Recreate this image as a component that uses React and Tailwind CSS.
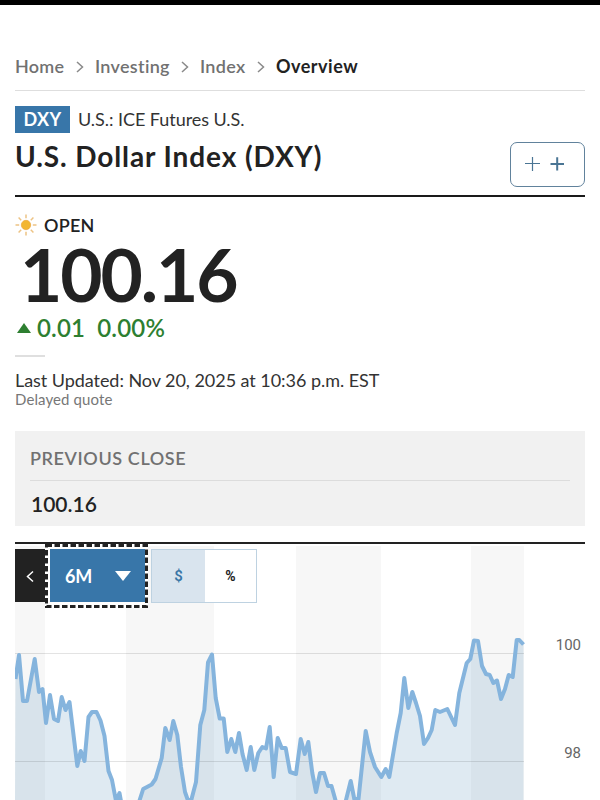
import clsx from 'clsx';

const crumbs = [
    { label: 'Home', width: 'w-[50px]', tracking: 'tracking-[0.25px]' },
    { label: 'Investing', width: 'w-[75px]', tracking: 'tracking-[0.3px]' },
    { label: 'Index', width: 'w-[46px]', tracking: 'tracking-[0.3px]' },
];

// Alternating month bands, [x, width]
const bands = [[0, 30], [111, 88], [281, 85], [456, 53]];

// Closing prices in page coordinates, shifted into the chart's box below
const prices = [
    [15.5, 679], [19, 655], [23, 701], [27, 701], [34.7, 659], [39, 692], [42.5, 689], [46, 723], [50, 695],
    [54, 719], [58, 721], [61.7, 697], [65.5, 710], [69.5, 702], [77.3, 766], [80.7, 751], [84.5, 761],
    [88.5, 717], [92, 712], [96.5, 712], [100.5, 720.5], [104.5, 736], [108.5, 771], [112, 780], [116, 801],
    [119.5, 793], [123, 812], [136, 812], [140, 799], [143.2, 789], [151.7, 784.5], [155.5, 779], [161.7, 758],
    [165.3, 728], [169.7, 740], [173.3, 721], [177.3, 735], [181, 767], [185, 792], [187.8, 800], [191.3, 800],
    [196, 782], [200.3, 725], [204.3, 710], [208, 662.5], [212, 654.5], [215.7, 698], [219.7, 718.5],
    [223.7, 718.5], [227.3, 752], [231.3, 739], [235.3, 752], [239, 733], [242.5, 754], [246.7, 770],
    [250.7, 747], [254.3, 770], [258.3, 753], [262.3, 747], [266, 748.5], [269.7, 727], [273.7, 777],
    [277.7, 738], [281.7, 748], [285.7, 748], [290, 772], [296, 774], [300.7, 739], [304.7, 754], [308.3, 742],
    [312.3, 773], [316, 792], [320, 773], [324, 773], [328, 786], [331.5, 786], [336, 802], [345.5, 802],
    [350.7, 781], [354.3, 799], [358.5, 799], [365.7, 731], [370, 752], [375, 767], [381.3, 777], [385.7, 769],
    [389.3, 777], [396.7, 733], [400.7, 713], [404.3, 678], [408.3, 708], [412.3, 692], [416, 703], [420, 716],
    [424, 744], [428, 738], [431.7, 730], [435.3, 710], [440, 712], [447.3, 709], [455, 725], [459.3, 693],
    [466.7, 663], [470.3, 659], [474, 640.5], [478, 641], [482, 666], [486, 674], [489.7, 675], [493.3, 683],
    [497, 680.5], [501, 699], [505, 689], [508.7, 675], [512.7, 677], [516.7, 640], [519.3, 640], [523.5, 644.5],
];

const linePoints = prices.map(([x, y]) => `${x - 15},${y - 545}`).join(' ');

function Chevron({ className, flip }) {
    return (
        <svg className={className} viewBox="0 0 8 12" fill="none" stroke="currentColor" strokeWidth="1.5">
            <path d={flip ? 'M7 1L1.5 6L7 11' : 'M1 1L6.5 6L1 11'} />
        </svg>
    );
}

function Sun() {
    return (
        <svg className="h-[22px] w-[22px]" viewBox="-11 -11 22 22">
            <circle r="4.7" fill="#f2b632" stroke="#eda63c" strokeWidth="0.7" />
            {[0, 45, 90, 135, 180, 225, 270, 315].map((a) => (
                <line key={a} x1="0" y1="-6.8" x2="0" y2="-10.5" stroke="#edc384" strokeWidth="1.5" transform={`rotate(${a})`} />
            ))}
        </svg>
    );
}

function Breadcrumbs() {
    return (
        <nav className="mt-[49px] flex h-[37px] items-start border-b border-[#dedede] text-[18px] leading-[24px] font-semibold text-[#717171]">
            {crumbs.map((c) => (
                <div key={c.label} className="flex items-center">
                    <span className={clsx('whitespace-nowrap', c.width, c.tracking)}>{c.label}</span>
                    <Chevron className="mx-[11px] mt-px h-3 w-2 text-[#8a8a8a]" />
                </div>
            ))}
            <span className="font-bold tracking-[0.5px] text-[#222]">Overview</span>
        </nav>
    );
}

function Quote() {
    return (
        <section className="text-[#222]">
            <div className="mt-[17px] flex h-[22px] items-center">
                <Sun />
                <span className="ml-[7px] text-[18px] leading-[22px] font-semibold tracking-[0.25px]">OPEN</span>
            </div>
            <div className="mt-px ml-[5px] h-[74px] text-[73px] leading-[74px] font-bold tracking-[-2.1px]">100.16</div>
            <div className="flex h-[34px] items-center text-[24px] leading-[28px] font-semibold tracking-[0.2px] text-[#2e7f31]">
                <svg className="mr-[6px] ml-[2px] h-[10px] w-[14px]" viewBox="0 0 14 10">
                    <path d="M7 0L14 10H0Z" fill="currentColor" />
                </svg>
                <span className="mr-[12px]">0.01</span>
                <span>0.00%</span>
            </div>
            <div className="mt-[10px] h-[2px] w-[30px] bg-[#dfdfdf]" />
            <p className="mt-[12px] h-[22px] text-[18px] leading-[22px] tracking-[-0.05px] whitespace-nowrap text-[#333]">Last Updated: Nov 20, 2025 at 10:36 p.m. EST</p>
            <p className="h-[18px] text-[15px] leading-[17px] tracking-[0.1px] text-[#777]">Delayed quote</p>
        </section>
    );
}

function PriceChart() {
    return (
        <svg className="col-start-1 row-start-1 h-[255px] w-[570px]" viewBox="0 0 570 255">
            {bands.map(([x, w]) => (
                <rect key={x} x={x} y="1" width={w} height="254" fill="#f7f7f7" />
            ))}
            <polygon points={`0,260 ${linePoints} 508.5,260`} fill="#3a7cb0" fillOpacity="0.16" />
            <path d="M0 108.5H509M0 216.5H509" stroke="#000" strokeOpacity="0.11" strokeWidth="1.2" />
            <polyline points={linePoints} fill="none" stroke="#85b4dd" strokeWidth="4" strokeLinejoin="round" />
        </svg>
    );
}

function RangeControls() {
    return (
        <div className="z-10 col-start-1 row-start-1 flex h-[65px] items-start">
            <button className="mt-[4px] flex h-[53px] w-[30px] items-center justify-center bg-[#222] text-white">
                <Chevron flip className="mt-[2px] h-[13px] w-[8px]" />
            </button>
            <div className="relative -mt-px h-[64px] w-[103px] bg-white pt-[5px] pl-[5px]">
                <button className="flex h-[53px] w-[95px] items-center justify-between bg-[#3876a9] pr-[14px] pl-[15px] text-white">
                    <span className="pt-[2px] text-[18px] font-bold tracking-[-0.1px]">6M</span>
                    <svg className="h-[10px] w-[16px]" viewBox="0 0 16 10">
                        <path d="M0 0H16L8 10Z" fill="currentColor" />
                    </svg>
                </button>
                <svg className="absolute inset-0 h-[64px] w-[103px]" viewBox="0 0 103 64" fill="none">
                    <rect x="1.5" y="1.5" width="100" height="61" stroke="#222" strokeWidth="3" strokeDasharray="5.5 2.5" />
                </svg>
            </div>
            <div className="mt-[4px] ml-[3px] flex h-[54px] w-[106px] border border-[#bed2e1] bg-white font-['Roboto'] font-bold">
                <button className="w-[53px] bg-[#d9e4ee] pt-px text-[15px] font-semibold text-[#3a76a6]">$</button>
                <button className="w-[51px] pt-px text-[14px] text-[#222]">%</button>
            </div>
        </div>
    );
}

export default function App() {
    return (
        <div className="h-[800px] w-[600px] overflow-hidden bg-white font-['Lato',sans-serif] text-[#222]">
            <div className="h-[5px] bg-black" />
            <main className="px-[15px]">
                <Breadcrumbs />

                <header className="flex h-[106px] justify-between border-b-2 border-[#1a1a1a]">
                    <div>
                        <div className="mt-[15px] flex h-[27px] items-center text-[18px]">
                            <span className="mr-[8px] flex h-[27px] w-[55px] items-center justify-center bg-[#3876a9] font-bold tracking-[0.4px] text-white">DXY</span>
                            <span className="text-[#333] tracking-[-0.05px]">U.S.: ICE Futures U.S.</span>
                        </div>
                        <h1 className="mt-[5px] text-[28px] leading-[36px] font-bold tracking-[0.9px] whitespace-nowrap">U.S. Dollar Index (DXY)</h1>
                    </div>
                    <button className="mt-[51px] flex h-[45px] w-[75px] items-center rounded-[7px] border border-[#61829c] pl-[14px] text-[#4a7594]">
                        <svg className="h-[16px] w-[40px]" viewBox="0 0 40 16" fill="none" stroke="currentColor">
                            <path d="M0 6.5H15M7.5 -1V14" strokeWidth="1.2" />
                            <path d="M25.5 7H39M32.2 0.2V13.5" strokeWidth="2" />
                        </svg>
                    </button>
                </header>

                <Quote />

                <section className="mt-[22px] h-[95px] bg-[#f1f1f1] px-[15px]">
                    <h2 className="h-[50px] border-b border-[#dcdcdc] pt-[14px] text-[18px] leading-[26px] font-semibold tracking-[0.6px] text-[#717171]">PREVIOUS CLOSE</h2>
                    <p className="pt-[9px] pl-px text-[21px] leading-[28px] font-semibold">100.16</p>
                </section>

                <section className="mt-[16px] border-t-2 border-[#222] pt-px">
                    <div className="grid w-[570px]">
                        <PriceChart />
                        <RangeControls />
                        <div className="col-start-1 row-start-1 flex flex-col items-end pt-[90px] pr-[4px] font-['Roboto'] text-[15px] leading-[20px] text-[#666]">
                            <span>100</span>
                            <span className="mt-[88px]">98</span>
                        </div>
                    </div>
                </section>
            </main>
        </div>
    );
}
